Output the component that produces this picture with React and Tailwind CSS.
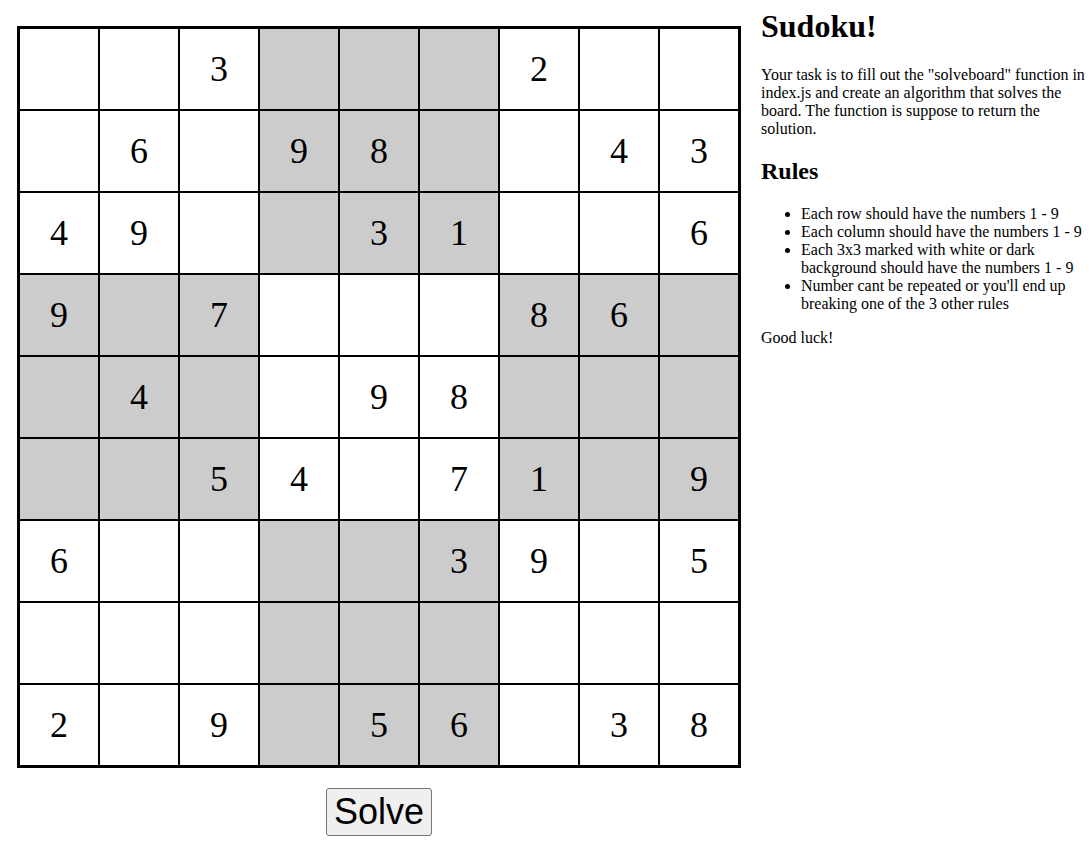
const BOARD = [
  "..3...2..",
  ".6.98..43",
  "49..31..6",
  "9.7...86.",
  ".4..98...",
  "..54.71.9",
  "6....39.5",
  ".........",
  "2.9.56.38",
];

// Alternate 3x3 boxes are shaded so that each box stands out.
const isShaded = (row, col) =>
  (Math.floor(row / 3) + Math.floor(col / 3)) % 2 === 1;

function Board() {
  return (
    <table
      aria-label="Sudoku board"
      className="border-separate border-spacing-[2px] border border-black bg-black text-center text-4xl"
    >
      <tbody>
        {BOARD.map((line, row) => (
          <tr key={row}>
            {line.split("").map((value, col) => (
              <td
                key={col}
                className={`h-20 w-[78px] min-w-[78px] p-0 align-middle ${
                  isShaded(row, col) ? "bg-[#cccccc]" : "bg-white"
                }`}
              >
                {value === "." ? "" : value}
              </td>
            ))}
          </tr>
        ))}
      </tbody>
    </table>
  );
}

function Instructions() {
  return (
    <section className="min-w-0 flex-1 text-base leading-[18px]">
      <h1 className="mb-[22px] text-[32px] font-bold leading-9">Sudoku!</h1>
      <p className="mb-5">
        Your task is to fill out the "solveboard" function in index.js and
        create an algorithm that solves the board. The function is suppose to
        return the solution.
      </p>
      <h2 className="mb-5 text-2xl font-bold leading-[27px]">Rules</h2>
      <ul className="mb-4 list-disc pl-10">
        <li>Each row should have the numbers 1 - 9</li>
        <li>Each column should have the numbers 1 - 9</li>
        <li>Each 3x3 marked with white or dark background should have the numbers 1 - 9</li>
        <li>Number cant be repeated or you'll end up breaking one of the 3 other rules</li>
      </ul>
      <p>Good luck!</p>
    </section>
  );
}

export default function App() {
  return (
    <main className="flex items-start gap-5 bg-white pt-2 pr-1 pl-[17px] font-['Liberation_Serif','Times_New_Roman',serif] text-black">
      <div className="flex shrink-0 flex-col items-center gap-5 pt-[18px]">
        <Board />
        <button
          type="button"
          className="rounded-[3px] border border-[#767676] bg-[#efefef] px-[7px] py-[3px] font-['Liberation_Sans',Arial,sans-serif] text-4xl leading-10"
        >
          Solve
        </button>
      </div>
      <Instructions />
    </main>
  );
}
